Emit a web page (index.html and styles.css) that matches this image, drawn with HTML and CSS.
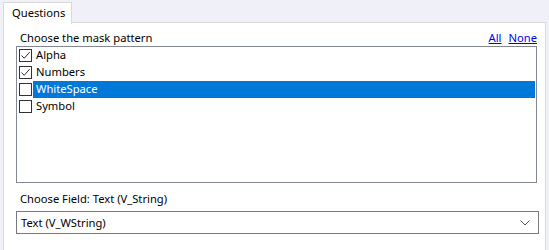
FILE: index.html
```html
<!DOCTYPE html>
<html>
<head>
<meta charset="utf-8">
<link rel="stylesheet" href="styles.css">
</head>
<body>
<div class="tabs">
  <div class="tab">Questions</div>
</div>
<div class="panel">
  <div class="head">
    <span class="label">Choose the mask pattern</span>
    <span class="links"><a href="#">All</a><a href="#">None</a></span>
  </div>
  <div class="list">
    <div class="item"><span class="cb checked"><svg width="11" height="11" viewBox="0 0 11 11"><path d="M1.5 5.5 L4.2 8.3 L9.6 2.2" fill="none" stroke="#333" stroke-width="1"/></svg></span><span class="txt">Alpha</span></div>
    <div class="item"><span class="cb checked"><svg width="11" height="11" viewBox="0 0 11 11"><path d="M1.5 5.5 L4.2 8.3 L9.6 2.2" fill="none" stroke="#333" stroke-width="1"/></svg></span><span class="txt">Numbers</span></div>
    <div class="item sel"><span class="cb"></span><span class="txt">WhiteSpace</span></div>
    <div class="item"><span class="cb"></span><span class="txt">Symbol</span></div>
  </div>
  <div class="label field">Choose Field: Text (V_String)</div>
  <div class="select">
    <span>Text (V_WString)</span>
    <svg width="10" height="6" viewBox="0 0 10 6"><path d="M0.5 0.5 L5 5 L9.5 0.5" fill="none" stroke="#555" stroke-width="1"/></svg>
  </div>
</div>
</body>
</html>
```
FILE: styles.css
```css
html, body { margin: 0; padding: 0; }
body {
  width: 549px;
  height: 250px;
  background: #f0f1f8;
  font-family: "Noto Sans", "Segoe UI", sans-serif;
  font-size: 11.2px;
  color: #000;
  overflow: hidden;
}
.tabs {
  display: flex;
  padding: 2px 0 0 3px;
  height: 20px;
}
.tab {
  background: #fff;
  border: 1px solid #d9d9d9;
  border-bottom: none;
  padding: 0 7px 0 8px;
  width: 52px;
  line-height: 19px;
  height: 21px;
  position: relative;
  z-index: 1;
}
.panel {
  background: #fff;
  margin: 0 3px 0 3px;
  border: 1px solid #d9d9d9;
  border-bottom: none;
  height: 230px;
  padding: 8px 0 0 12px;
  box-sizing: border-box;
}
.head {
  display: flex;
  justify-content: space-between;
  width: 521px;
  height: 15px;
  line-height: 14px;
}
.label { padding-left: 4px; }
.links { display: flex; gap: 7px; }
.links a { color: #0000ee; }
.list {
  width: 521px;
  height: 137px;
  border: 1px solid #828790;
  padding: 0 1px 0 2px;
  box-sizing: border-box;
}
.item {
  display: flex;
  align-items: center;
  height: 17px;
}
.cb {
  width: 13px;
  height: 13px;
  border: 1px solid #333;
  box-sizing: border-box;
  display: flex;
  align-items: center;
  justify-content: center;
  margin-right: 1px;
  background: #fff;
}
.txt {
  flex: 1;
  height: 17px;
  line-height: 16px;
  padding-left: 3px;
}
.sel .txt { background: #0078d7; color: #fff; }
.field { margin-top: 9px; height: 15px; line-height: 14px; }
.select {
  margin-top: 4px;
  width: 523px;
  height: 23px;
  border: 1px solid #7a7a7a;
  box-sizing: border-box;
  display: flex;
  align-items: center;
  justify-content: space-between;
  padding: 0 8px 0 4px;
}
.select span { line-height: 20px; }
```
